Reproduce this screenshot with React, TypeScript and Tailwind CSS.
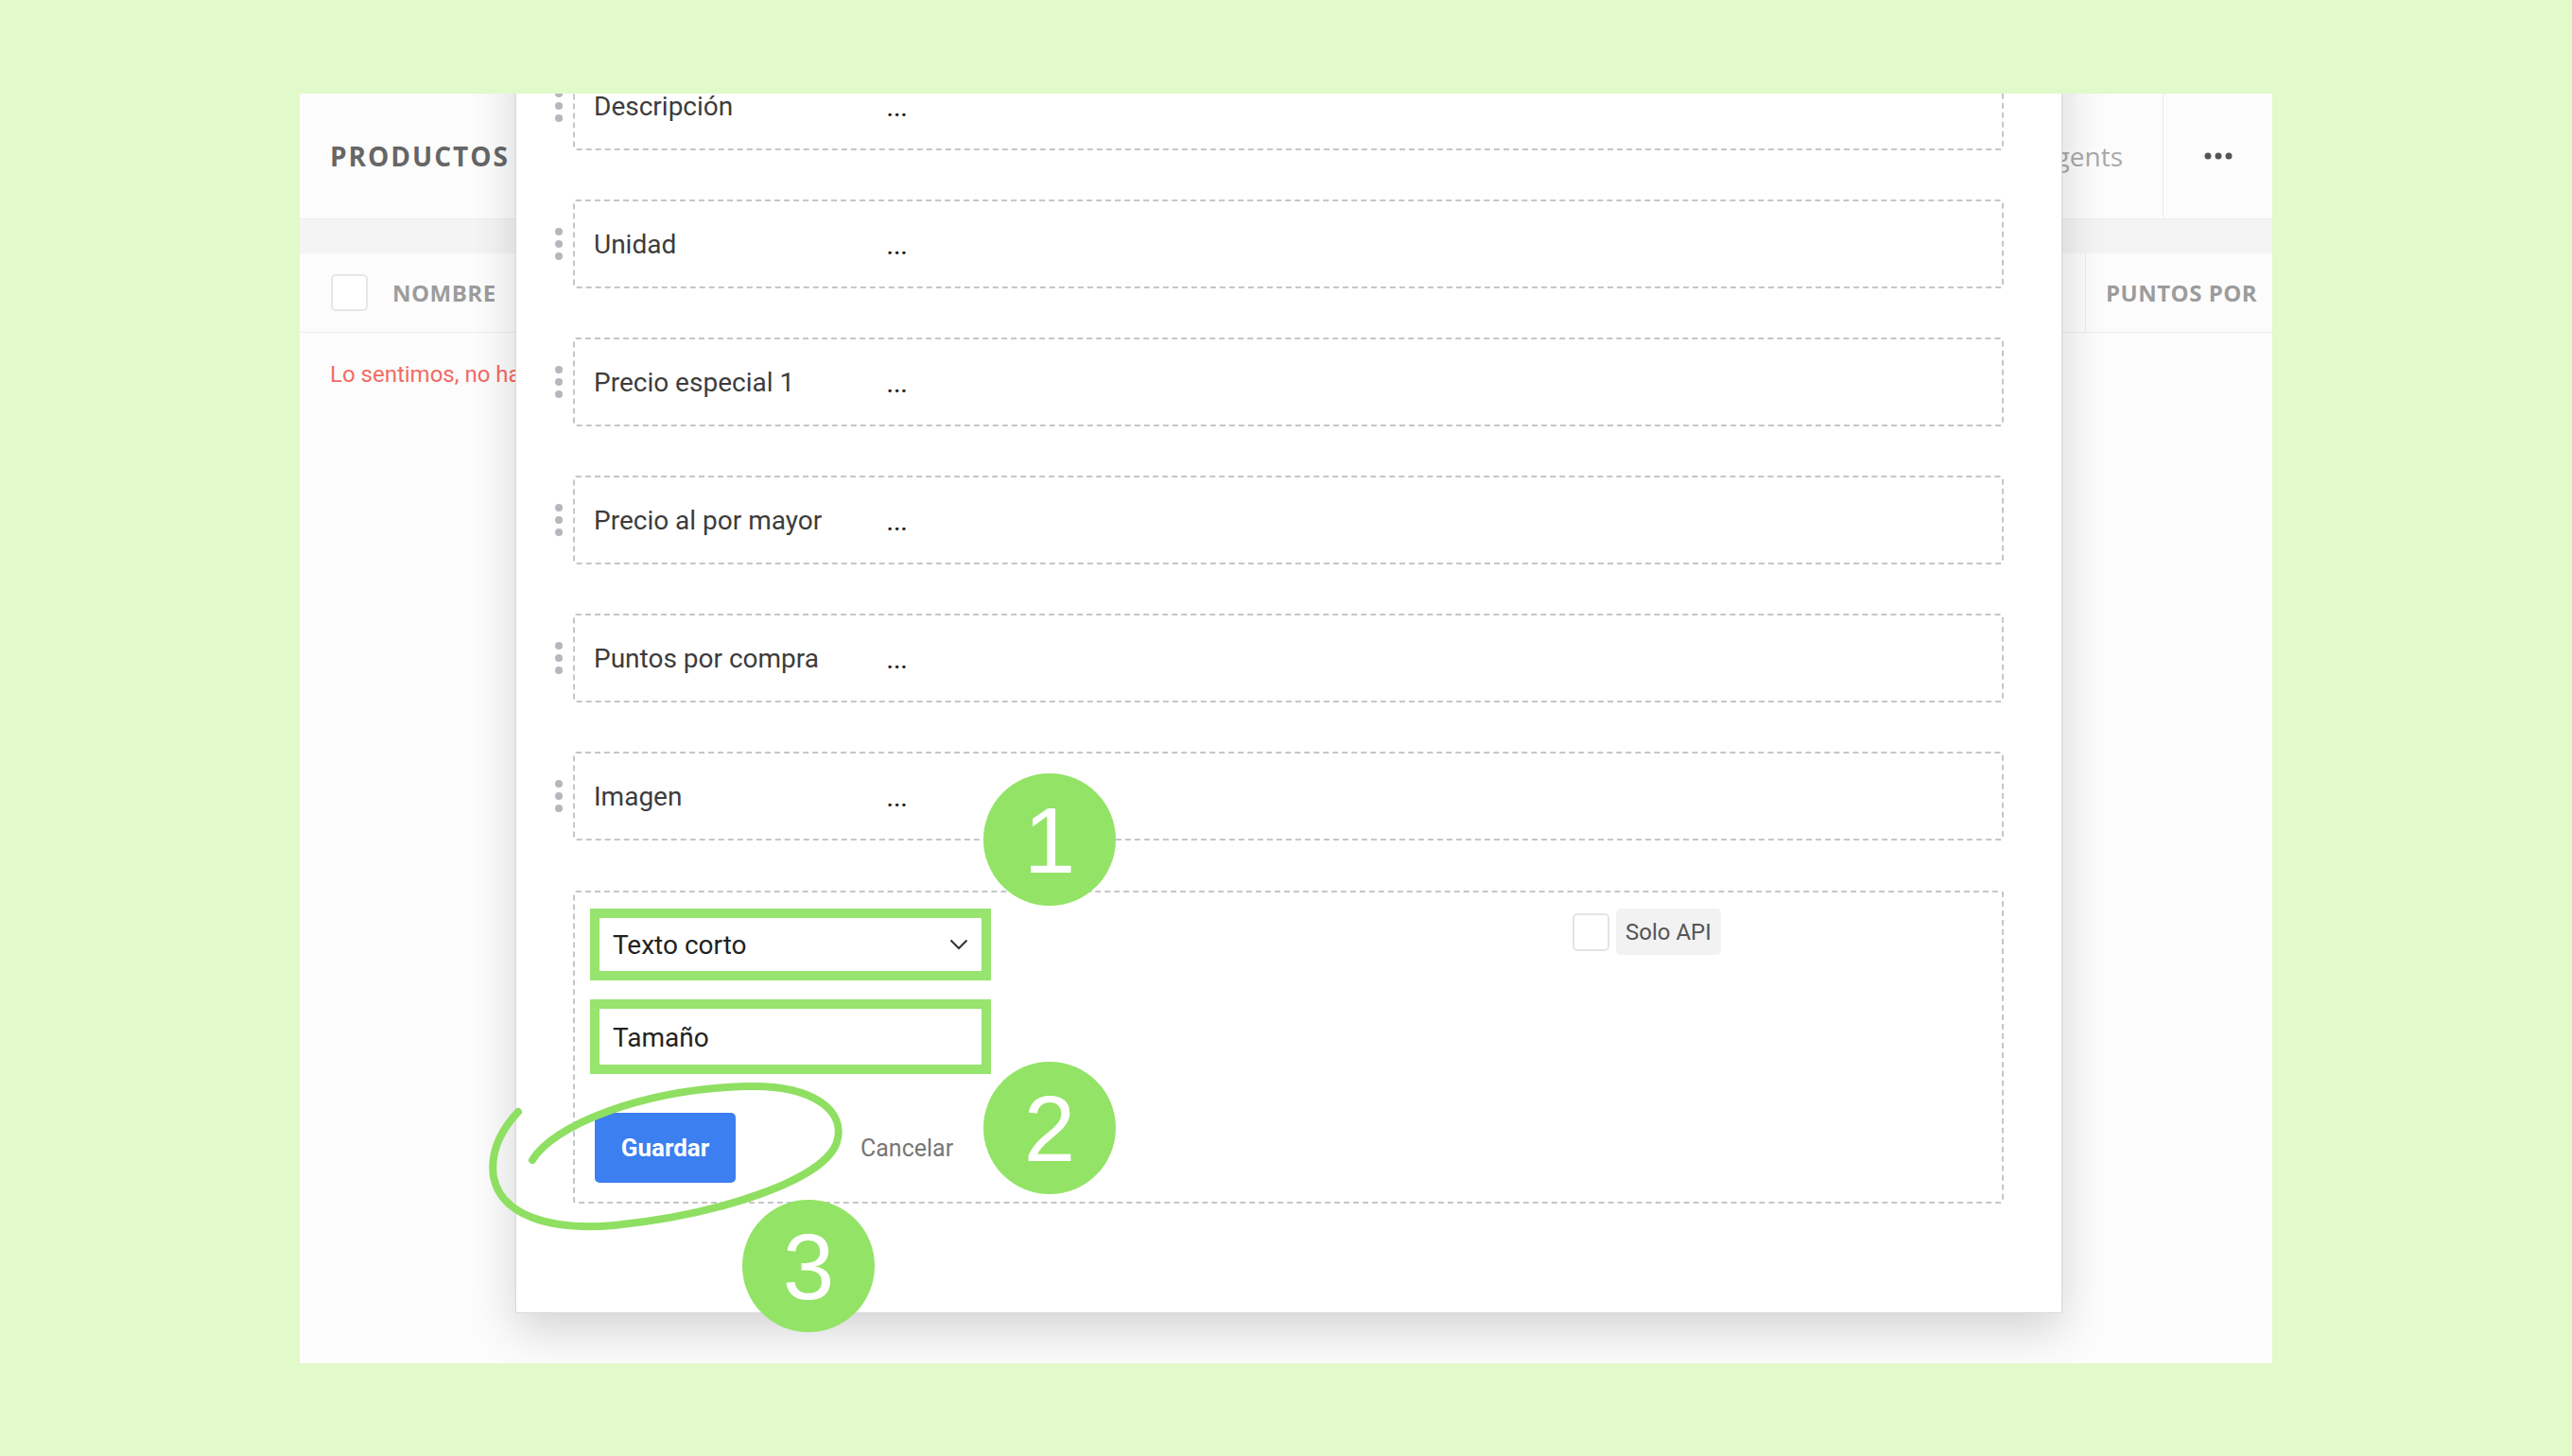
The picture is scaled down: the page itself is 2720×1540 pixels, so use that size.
const fields = [
  "Descripción",
  "Unidad",
  "Precio especial 1",
  "Precio al por mayor",
  "Puntos por compra",
  "Imagen",
];

const Handle = () => (
  <div className="flex w-[12px] flex-col items-center gap-[5px]">
    <span className="h-[8px] w-[8px] rounded-full bg-[#b6b6be]" />
    <span className="h-[8px] w-[8px] rounded-full bg-[#b6b6be]" />
    <span className="h-[8px] w-[8px] rounded-full bg-[#b6b6be]" />
  </div>
);

const FieldRow = ({ label }: { label: string }) => (
  <div className="flex items-center gap-[9px]">
    <Handle />
    <div className="flex h-[94px] flex-1 items-center rounded-[3px] border-2 border-dashed border-[#c6c6c6] pl-[20px]">
      <span className="w-[310px] pt-[2px] text-[28px] text-[#3c3c3c]">{label}</span>
      <span className="pt-[8px] text-[22px] font-bold leading-none tracking-[1px] text-[#1f1f1f]">...</span>
    </div>
  </div>
);

// the green marker drawn on top of the screenshot
const Annotations = () => (
  <svg className="pointer-events-none absolute left-0 top-0" width="2720" height="1540" viewBox="0 0 2720 1540">
    <path
      d="M563 1227 C585 1190, 680 1152, 790 1149 C860 1147, 895 1175, 885 1208 C872 1248, 760 1285, 650 1296 C580 1302, 530 1285, 522 1245 C518 1218, 530 1195, 548 1176"
      fill="none"
      stroke="#8fdf62"
      strokeWidth="8"
      strokeLinecap="round"
    />
    {[
      { n: "1", x: 1110, y: 888 },
      { n: "2", x: 1110, y: 1193 },
      { n: "3", x: 855, y: 1339 },
    ].map((c) => (
      <g key={c.n}>
        <circle cx={c.x} cy={c.y} r="70" fill="#93e366" />
        <text
          x={c.x}
          y={c.y + 35}
          textAnchor="middle"
          fill="#ffffff"
          fontSize="98"
          fontFamily="'Liberation Sans', Arial, sans-serif"
        >
          {c.n}
        </text>
      </g>
    ))}
  </svg>
);

export default function App() {
  return (
    <div className="relative h-[1540px] w-[2720px] bg-[#e2f9c9] pl-[317px] pt-[99px] font-['Roboto',sans-serif]">
      <div className="relative h-[1343px] w-[2086px] overflow-hidden bg-[#fcfcfc]">
        {/* page behind the modal */}
        <div className="flex h-[133px] items-center border-b border-[#ececec] pl-[32px]">
          <span className="flex-1 font-['Open_Sans',sans-serif] text-[28px] font-bold tracking-[2px] text-[#666]">PRODUCTOS</span>
          <span className="pr-[42px] font-['Open_Sans',sans-serif] text-[28px] text-[#a9a9a9]">Agents</span>
          <div className="flex h-full w-[116px] items-center justify-center border-l border-[#ececec]">
            <svg width="30" height="8" viewBox="0 0 30 8">
              <circle cx="4" cy="4" r="3.5" fill="#555" />
              <circle cx="15" cy="4" r="3.5" fill="#555" />
              <circle cx="26" cy="4" r="3.5" fill="#555" />
            </svg>
          </div>
        </div>
        <div className="h-[36px] bg-[#f4f4f4]" />
        <div className="flex h-[84px] items-center border-b border-[#ececec] pl-[33px]">
          <span className="h-[39px] w-[39px] rounded-[5px] border-2 border-[#e6e6e6] bg-white" />
          <span className="ml-[26px] flex-1 font-['Open_Sans',sans-serif] text-[24px] font-bold tracking-[0.5px] text-[#9c9c9c]">NOMBRE</span>
          <div className="flex h-full w-[198px] items-center border-l border-[#ececec] pl-[21px]">
            <span className="font-['Open_Sans',sans-serif] text-[24px] font-bold tracking-[0.5px] text-[#9c9c9c]">PUNTOS POR</span>
          </div>
        </div>
        <div className="pl-[32px] pt-[26px] text-[24px] text-[#f26b64]">Lo sentimos, no hay productos disponibles</div>

        {/* modal */}
        <div className="absolute left-[228px] top-[-58px] w-[1636px] border-x border-b border-[#d9d9d9] bg-white pb-[115px] pl-[39px] pr-[61px] pt-[24px] shadow-[0_18px_45px_rgba(0,0,0,0.16)]">
          <div className="flex flex-col gap-[52px]">
            {fields.map((f) => (
              <FieldRow key={f} label={f} />
            ))}
            <div className="ml-[21px] mt-[1px] flex h-[331px] justify-between rounded-[3px] border-2 border-dashed border-[#c6c6c6] pl-[16px] pt-[17px]">
              <div className="flex w-[424px] flex-col">
                <div className="flex h-[76px] items-center justify-between border-[10px] border-[#97e46e] bg-white pl-[14px] pr-[14px]">
                  <span className="pt-[2px] text-[28px] text-[#222]">Texto corto</span>
                  <svg width="20" height="12" viewBox="0 0 20 12">
                    <path d="M1.5 1.5 L10 10 L18.5 1.5" fill="none" stroke="#333" strokeWidth="2" />
                  </svg>
                </div>
                <div className="mt-[20px] flex h-[79px] items-center border-[10px] border-[#97e46e] bg-white pl-[14px]">
                  <span className="pt-[2px] text-[28px] text-[#222]">Tamaño</span>
                </div>
                <div className="mt-[41px] flex items-center">
                  <button className="ml-[5px] h-[74px] w-[149px] rounded-[5px] bg-[#3b7ff0] text-[26px] font-bold text-white">Guardar</button>
                  <span className="ml-[132px] pt-[2px] text-[25px] text-[#777]">Cancelar</span>
                </div>
              </div>
              <div className="flex w-[454px] items-start">
                <div className="flex items-center gap-[7px]">
                  <span className="h-[40px] w-[39px] rounded-[5px] border-2 border-[#e4e4e4] bg-white" />
                  <span className="flex h-[49px] items-center rounded-[5px] bg-[#f2f2f2] px-[10px] text-[24px] text-[#555]">Solo API</span>
                </div>
              </div>
            </div>
          </div>
        </div>
      </div>
      <Annotations />
    </div>
  );
}
